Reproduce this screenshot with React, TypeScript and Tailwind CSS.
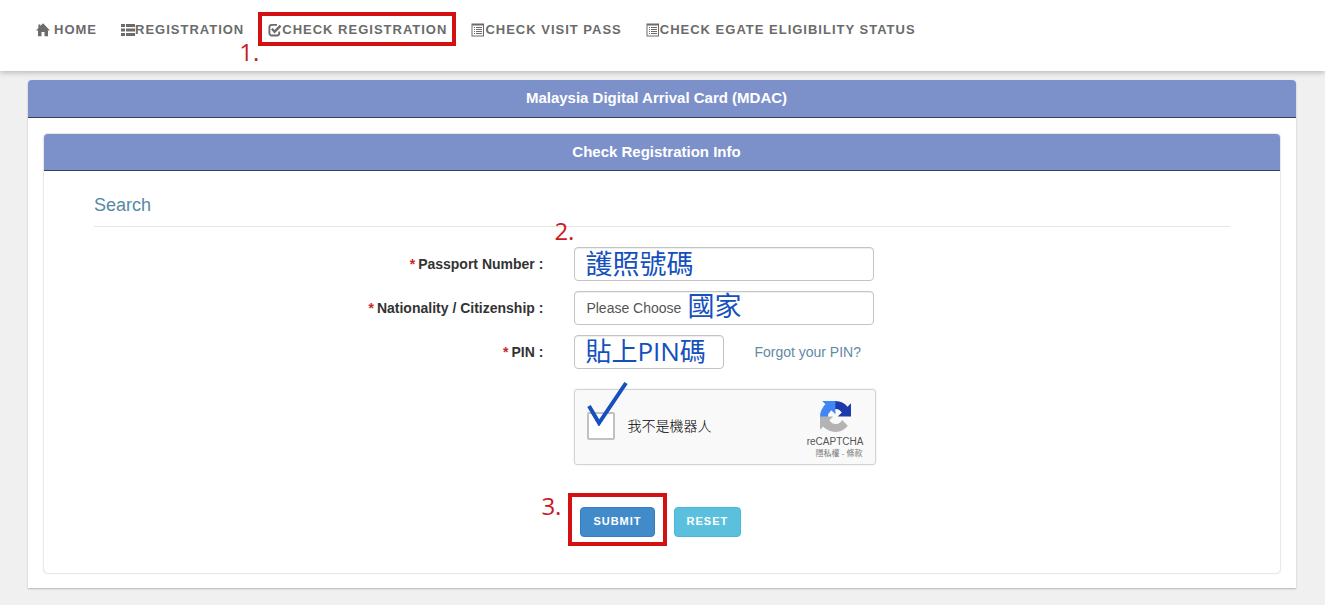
import React from 'react';
import type { ReactNode } from 'react';

interface NavLinkProps {
  label: string;
  icon: ReactNode;
  current?: boolean;
}

interface FormRowProps {
  id: string;
  label: string;
  children: ReactNode;
}

const FIELD_CLASS =
  'h-[34px] rounded-[4px] border border-[#c4c4c8] bg-white shadow-[inset_0_1px_1px_rgba(0,0,0,0.07)] outline-none focus:border-[#66afe9]';

const FILLED_CLASS =
  "px-[10px] pb-1 font-['Open_Sans','Noto_Sans_CJK_TC',sans-serif] leading-7 text-[#1450be]";

const NOTE_CLASS =
  "pointer-events-none absolute font-['Open_Sans','Noto_Sans_CJK_TC',sans-serif] leading-none font-normal";

function HomeIcon() {
  return (
    <svg viewBox="0 0 14 14" className="mr-1 size-[14px]" fill="currentColor" aria-hidden="true">
      <path d="M7 .3 14 7.600h-2v5.600H8.500V9h-3v4.200H2V7.600H0L2.400 5V1.600h2v1.400z" />
    </svg>
  );
}

function ListIcon() {
  return (
    <svg viewBox="0 0 14 14" className="size-[14px]" fill="currentColor" aria-hidden="true">
      <path d="M0 1h4v3H0zM5 1h9v3H5zM0 5.500h4v3H0zM5 5.500h9v3H5zM0 10h4v3H0zM5 10h9v3H5z" />
    </svg>
  );
}

function CheckIcon() {
  return (
    <svg viewBox="0 0 14 14" className="size-[14px]" fill="none" stroke="currentColor" aria-hidden="true">
      <path d="M9 1.900H3.600A2.200 2.200 0 0 0 1.400 4.100v6.200a2.200 2.200 0 0 0 2.200 2.200h5.400a2.200 2.200 0 0 0 2.200-2.200V8.600" strokeWidth="1.900" />
      <path d="m3.900 5.800 2.700 2.900 6-6.100" strokeWidth="2.400" />
    </svg>
  );
}

function ListAltIcon() {
  return (
    <svg viewBox="0 0 14 14" className="size-[14px]" fill="currentColor" aria-hidden="true">
      <path d="M.500.500h12.500v13H.500zM1.500 2.500v10H12v-10z" fillRule="evenodd" />
      <path d="M3 4h1v1H3zM5 4h6v1H5zM3 6h1v1H3zM5 6h6v1H5zM3 8h1v1H3zM5 8h6v1H5zM3 10h1v1H3zM5 10h6v1H5z" />
    </svg>
  );
}

function RecaptchaLogo() {
  return (
    <svg viewBox="0 0 64 64" className="size-[31px]" aria-hidden="true">
      <path
        fill="#1c3aa9"
        d="M64 31.955l-.033-1.37V4.687l-7.16 7.16C50.948 4.674 42.033.093 32.050.093c-10.400 0-19.622 4.960-25.458 12.640l11.736 11.860a15.550 15.550 0 0 1 4.754-5.334c2.050-1.600 4.952-2.906 8.968-2.906.485 0 .860.057 1.135.163 4.976.393 9.288 3.140 11.828 7.124l-8.307 8.307L64 31.953"
      />
      <path
        fill="#4285f4"
        d="M31.862.094l-1.370.033H4.594l7.160 7.160C4.580 13.147 0 22.060 0 32.046c0 10.400 4.960 19.622 12.640 25.458L24.500 45.768a15.550 15.550 0 0 1-5.334-4.754c-1.600-2.050-2.906-4.952-2.906-8.968 0-.485.057-.860.163-1.135.393-4.976 3.140-9.288 7.124-11.828l8.307 8.307L31.860.095"
      />
      <path
        fill="#b4b4b4"
        d="M.001 32.045l.033 1.370v25.898l7.160-7.160c5.860 7.173 14.774 11.754 24.760 11.754 10.400 0 19.622-4.960 25.458-12.640l-11.736-11.860a15.550 15.550 0 0 1-4.754 5.334c-2.050 1.600-4.952 2.906-8.968 2.906-.485 0-.860-.057-1.135-.163-4.976-.393-9.288-3.140-11.828-7.124l8.307-8.307c-10.522.040-22.400.066-27.295-.005"
      />
    </svg>
  );
}

function NavLink({ label, icon, current }: NavLinkProps) {
  return (
    <a
      href="#"
      aria-current={current ? 'page' : undefined}
      className="relative flex items-center text-[13px] leading-5 font-bold tracking-[1px] text-[#6b6b6b] hover:text-[#333333]"
    >
      {icon}
      {label}
      {current && (
        <>
          <span className="pointer-events-none absolute -top-2 -right-[9px] -bottom-[6px] -left-[10px] border-4 border-[#d41111]" />
          <span className={`${NOTE_CLASS} top-5 -left-[29px] text-2xl tracking-normal text-[#cc1a22]`}>1.</span>
        </>
      )}
    </a>
  );
}

function PanelHeading({ children }: { children: ReactNode }) {
  return (
    <div className="rounded-t-[4px] border-b border-[#343f63] bg-[#7c91ca] py-2 pr-[11px] text-center text-[15px] leading-5 font-bold text-white">
      {children}
    </div>
  );
}

function FormRow({ id, label, children }: FormRowProps) {
  return (
    <div className="flex items-center">
      <label htmlFor={id} className="w-2/5 pr-[5px] text-right font-bold text-[#333333]">
        <span className="mr-[3px] text-[#c9252d]">*</span>
        {label} :
      </label>
      <div className="relative flex flex-1 items-center pl-[26px]">{children}</div>
    </div>
  );
}

export default function App() {
  return (
    <div className="min-h-screen bg-[#f0f0f0] font-['Liberation_Sans','Noto_Sans_CJK_TC',sans-serif] text-sm">
      <header className="relative bg-white shadow-[0_1px_6px_rgba(0,0,0,0.28)]">
        <nav className="flex gap-6 px-9 pt-5 pb-[31px]">
          <NavLink label="HOME" icon={<HomeIcon />} />
          <NavLink label="REGISTRATION" icon={<ListIcon />} />
          <NavLink label="CHECK REGISTRATION" icon={<CheckIcon />} current />
          <NavLink label="CHECK VISIT PASS" icon={<ListAltIcon />} />
          <NavLink label="CHECK EGATE ELIGIBILITY STATUS" icon={<ListAltIcon />} />
        </nav>
      </header>

      <main className="pt-[9px] pr-[29px] pb-4 pl-7">
        <section className="rounded-t-[4px] bg-white shadow-[0_1px_2px_rgba(0,0,0,0.25)]">
          <PanelHeading>
            <h1 className="pb-px">Malaysia Digital Arrival Card (MDAC)</h1>
          </PanelHeading>
          <div className="px-4 pt-4 pb-[15px]">
            <section className="rounded-[4px] bg-white shadow-[0_0_2px_rgba(0,0,0,0.35)]">
              <PanelHeading>
                <h2>Check Registration Info</h2>
              </PanelHeading>
              <form className="px-[50px] pt-6 pb-[27px]" onSubmit={(e) => e.preventDefault()}>
                <h3 className="border-b border-[#e5e5e5] pb-[11px] text-lg leading-5 text-[#5789a3]">Search</h3>

                <div className="mt-5 flex flex-col gap-[10px]">
                  <FormRow id="passport" label="Passport Number">
                    <input
                      id="passport"
                      type="text"
                      defaultValue="護照號碼"
                      className={`${FIELD_CLASS} ${FILLED_CLASS} w-[300px] text-[27px]`}
                    />
                    <span className={`${NOTE_CLASS} -top-7 left-[6px] text-2xl text-[#cc1a22]`}>2.</span>
                  </FormRow>
                  <FormRow id="nationality" label="Nationality / Citizenship">
                    <select
                      id="nationality"
                      className={`${FIELD_CLASS} w-[300px] appearance-none px-[11px] text-[#555555]`}
                    >
                      <option>Please Choose</option>
                    </select>
                    <span className={`${NOTE_CLASS} top-[1px] left-[139px] text-[27px] text-[#1450be]`}>國家</span>
                  </FormRow>
                  <FormRow id="pin" label="PIN">
                    <input
                      id="pin"
                      type="text"
                      defaultValue="貼上PIN碼"
                      className={`${FIELD_CLASS} ${FILLED_CLASS} w-[150px] text-[26px]`}
                    />
                    <a href="#" className="ml-[30px] text-[#5f8ba3] hover:underline">
                      Forgot your PIN?
                    </a>
                  </FormRow>
                </div>

                <div className="mt-5 ml-[40%] pl-[26px]">
                  <div className="flex h-[76px] w-[302px] items-center justify-between rounded-[3px] border border-[#d3d3d3] bg-[#f9f9f9] pr-3 pl-3 shadow-[0_0_3px_rgba(0,0,0,0.08)]">
                    <div className="relative flex items-center gap-3 pb-[2px]">
                      <input
                        id="robot"
                        type="checkbox"
                        className="size-7 appearance-none rounded-[2px] border-2 border-[#c1c1c1] bg-white"
                      />
                      <label htmlFor="robot" className="font-light text-black">
                        我不是機器人
                      </label>
                      <svg
                        viewBox="0 0 42 46"
                        className="pointer-events-none absolute -top-8 left-0 h-[46px] w-[42px]"
                        fill="none"
                        stroke="#1450be"
                        strokeWidth="4"
                        aria-hidden="true"
                      >
                        <path d="M2 26 12 43 39 3" />
                      </svg>
                    </div>
                    <div className="flex flex-col items-center pt-[6px] text-[#555555]">
                      <RecaptchaLogo />
                      <span className="mt-1 text-[10px] leading-3">reCAPTCHA</span>
                      <span className="ml-2 text-[8px] leading-3 text-[#777777]">
                        <a href="#">隱私權</a> - <a href="#">條款</a>
                      </span>
                    </div>
                  </div>

                  <div className="mt-7 -ml-[6px] flex items-start gap-[7px]">
                    <div className="relative border-4 border-[#d41111] px-2 pt-[10px] pb-[5px]">
                      <button
                        type="submit"
                        className="block h-[30px] rounded-[4px] border border-[#357ebd] bg-[#428bca] px-3 text-[11px] font-bold tracking-[1px] text-white"
                      >
                        SUBMIT
                      </button>
                      <span className={`${NOTE_CLASS} -top-[3px] -left-[31px] text-2xl text-[#cc1a22]`}>3.</span>
                    </div>
                    <button
                      type="reset"
                      className="mt-[14px] h-[30px] rounded-[4px] border border-[#46b8da] bg-[#5bc0de] px-3 text-[11px] font-bold tracking-[1px] text-white"
                    >
                      RESET
                    </button>
                  </div>
                </div>
              </form>
            </section>
          </div>
        </section>
      </main>
    </div>
  );
}
